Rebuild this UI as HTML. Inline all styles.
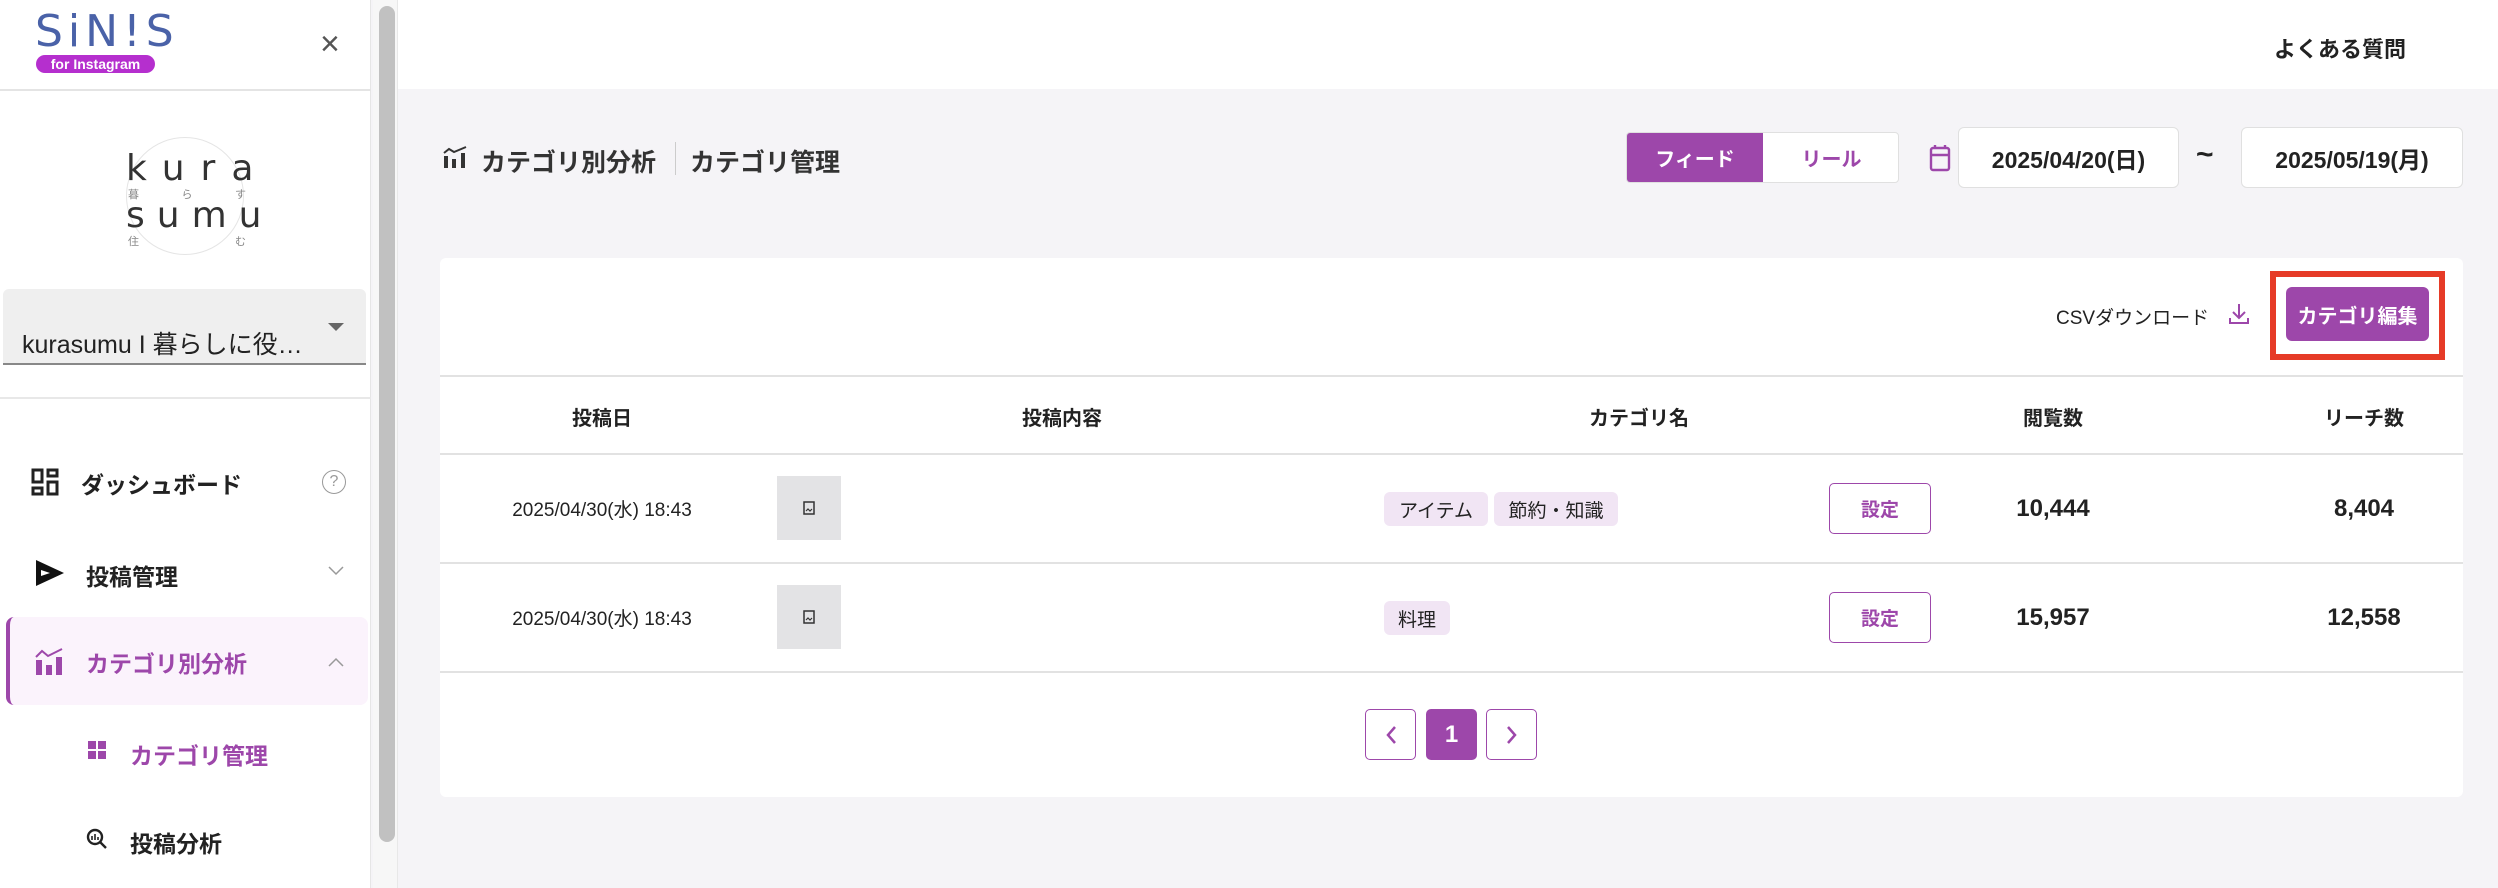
<!DOCTYPE html>
<html><head><meta charset="utf-8">
<style>
*{margin:0;padding:0;box-sizing:border-box}
body{width:2498px;height:888px;overflow:hidden;background:#f5f4f7;font-family:"Liberation Sans","Noto Sans CJK JP",sans-serif;color:#222;position:relative}
.a{position:absolute}
.c{display:flex;align-items:center;justify-content:center}
.pur{color:#9d47aa}
</style></head><body>
<div class="a" style="left:398px;top:0;width:2100px;height:89px;background:#fff"></div>
<div class="a" style="left:2274px;top:32px;font-size:22px;font-weight:700;color:#222">よくある質問</div>

<div class="a" style="left:0;top:0;width:371px;height:888px;background:#fff;border-right:1px solid #e6e6e6"></div>
<div class="a" style="left:373px;top:0;width:25px;height:888px;background:#f7f7f7;border-right:1px solid #e8e8e8"></div>
<div class="a" style="left:379px;top:6px;width:16px;height:836px;background:#c1c1c1;border-radius:8px"></div>

<div class="a" style="left:35px;top:8px;font-size:44px;letter-spacing:5px;color:#4a62a8;font-family:'DejaVu Sans',sans-serif;line-height:48px">SiN!S</div>
<div class="a c" style="left:36px;top:55px;width:119px;height:18px;background:#b52fce;border-radius:9px;color:#fff;font-size:14px;font-weight:700">for Instagram</div>
<div class="a" style="left:320px;top:25px;font-size:34px;color:#555;font-weight:300">×</div>
<div class="a" style="left:0;top:89px;width:371px;height:2px;background:#e4e4e4"></div>

<div class="a" style="left:126px;top:137px;width:118px;height:118px;border:1px solid #e5e5e5;border-radius:50%"></div>
<div class="a" style="left:126px;top:148px;font-size:36px;letter-spacing:16px;color:#333;font-family:'DejaVu Sans',sans-serif">kura</div>
<div class="a" style="left:128px;top:186px;font-size:11px;color:#888;width:118px;display:flex;justify-content:space-between"><span>暮</span><span>ら</span><span>す</span></div>
<div class="a" style="left:126px;top:195px;font-size:36px;letter-spacing:12px;color:#333;font-family:'DejaVu Sans',sans-serif">sumu</div>
<div class="a" style="left:128px;top:233px;font-size:11px;color:#888;width:118px;display:flex;justify-content:space-between"><span>住</span><span>む</span></div>

<div class="a" style="left:3px;top:289px;width:363px;height:76px;background:#efefef;border-radius:6px 6px 0 0;border-bottom:2px solid #888"></div>
<div class="a" style="left:22px;top:325px;font-size:25px;color:#222">kurasumu I 暮らしに役…</div>
<div class="a" style="left:328px;top:323px;width:0;height:0;border-left:8px solid transparent;border-right:8px solid transparent;border-top:8px solid #666"></div>
<div class="a" style="left:0;top:397px;width:371px;height:2px;background:#e8e8e8"></div>

<svg class="a" style="left:31px;top:468px" width="28" height="28" viewBox="0 0 28 28" fill="none" stroke="#222" stroke-width="3"><rect x="2" y="2" width="9" height="12"/><rect x="17" y="2" width="9" height="6"/><rect x="2" y="20" width="9" height="6"/><rect x="17" y="14" width="9" height="12"/></svg>
<div class="a" style="left:81px;top:466px;font-size:23px;font-weight:700">ダッシュボード</div>
<div class="a c" style="left:322px;top:470px;width:24px;height:24px;border:1.5px solid #999;border-radius:50%;color:#999;font-size:16px">?</div>

<svg class="a" style="left:36px;top:560px" width="28" height="26" viewBox="0 0 28 26"><path d="M0 0 L28 13 L0 26 Z M5 10 L5 16 L14 13 Z" fill="#111" fill-rule="evenodd"/></svg>
<div class="a" style="left:86px;top:558px;font-size:23px;font-weight:700">投稿管理</div>
<svg class="a" style="left:328px;top:566px" width="16" height="10" viewBox="0 0 16 10" fill="none" stroke="#999" stroke-width="1.5"><path d="M1 1 L8 8 L15 1"/></svg>

<div class="a" style="left:6px;top:617px;width:362px;height:88px;background:#fbf3fc;border-radius:8px;border-left:4px solid #9d47aa"></div>
<svg class="a" style="left:35px;top:648px" width="28" height="27" viewBox="0 0 28 27"><path d="M1 9 L7 3 L13 8 L27 1" fill="none" stroke="#9d47aa" stroke-width="2"/><rect x="1" y="12" width="6" height="15" fill="#9d47aa"/><rect x="11" y="17" width="6" height="10" fill="#9d47aa"/><rect x="21" y="9" width="6" height="18" fill="#9d47aa"/></svg>
<div class="a pur" style="left:86px;top:645px;font-size:23px;font-weight:700">カテゴリ別分析</div>
<svg class="a" style="left:328px;top:657px" width="16" height="10" viewBox="0 0 16 10" fill="none" stroke="#999" stroke-width="1.5"><path d="M1 9 L8 2 L15 9"/></svg>

<svg class="a" style="left:88px;top:741px" width="18" height="18" viewBox="0 0 18 18" fill="#9d47aa"><rect x="0" y="0" width="8" height="8"/><rect x="10" y="0" width="8" height="8"/><rect x="0" y="10" width="8" height="8"/><rect x="10" y="10" width="8" height="8"/></svg>
<div class="a pur" style="left:130px;top:737px;font-size:23px;font-weight:700">カテゴリ管理</div>

<svg class="a" style="left:86px;top:828px" width="22" height="22" viewBox="0 0 22 22" fill="none" stroke="#222" stroke-width="2.4"><circle cx="9" cy="9" r="7"/><path d="M14 14 L20 20"/><path d="M6 12V8M9 12V6M12 12V9" stroke-width="1.6"/></svg>
<div class="a" style="left:130px;top:825px;font-size:23px;font-weight:700">投稿分析</div>

<svg class="a" style="left:443px;top:146px" width="24" height="22" viewBox="0 0 24 22"><path d="M1 7 L6 3 L11 6 L23 1" fill="none" stroke="#333" stroke-width="2"/><rect x="1" y="10" width="4" height="12" fill="#333"/><rect x="9" y="13" width="4" height="9" fill="#333"/><rect x="18" y="7" width="4" height="15" fill="#333"/></svg>
<div class="a" style="left:481px;top:143px;font-size:25px;font-weight:700;color:#333">カテゴリ別分析</div>
<div class="a" style="left:675px;top:142px;width:1px;height:33px;background:#ccc"></div>
<div class="a" style="left:690px;top:143px;font-size:25px;font-weight:700;color:#333">カテゴリ管理</div>

<div class="a" style="left:1626px;top:132px;width:273px;height:51px;background:#fff;border:1px solid #e0e0e0;border-radius:4px;overflow:hidden">
<div class="a c" style="left:0;top:0;width:136px;height:100%;background:#9d47aa;color:#fff;font-size:20px;font-weight:700">フィード</div>
<div class="a c pur" style="left:136px;top:0;width:137px;height:100%;font-size:20px;font-weight:700">リール</div>
</div>
<svg class="a" style="left:1929px;top:144px" width="22" height="28" viewBox="0 0 22 28" fill="none" stroke="#9d47aa" stroke-width="2.4"><rect x="2" y="4" width="18" height="22" rx="2"/><path d="M2 11H20M6 1V5M16 1V5"/></svg>
<div class="a c" style="left:1958px;top:127px;width:221px;height:61px;background:#fff;border:1px solid #e0e0e0;border-radius:6px;font-size:23px;font-weight:700">2025/04/20(日)</div>
<div class="a" style="left:2196px;top:138px;font-size:30px;font-weight:700">~</div>
<div class="a c" style="left:2241px;top:127px;width:222px;height:61px;background:#fff;border:1px solid #e0e0e0;border-radius:6px;font-size:23px;font-weight:700">2025/05/19(月)</div>

<div class="a" style="left:440px;top:258px;width:2023px;height:539px;background:#fff;border-radius:6px"></div>
<div class="a" style="left:2056px;top:303px;font-size:19px;color:#222">CSVダウンロード</div>
<svg class="a" style="left:2228px;top:303px" width="22" height="22" viewBox="0 0 22 22" fill="none" stroke="#9d47aa" stroke-width="2"><path d="M11 1V14M5 9L11 15L17 9M2 15V20H20V15"/></svg>
<div class="a" style="left:2270px;top:271px;width:175px;height:89px;border:6px solid #e63b27"></div>
<div class="a c" style="left:2286px;top:287px;width:143px;height:54px;background:#9d47aa;border-radius:6px;color:#fff;font-size:20px;font-weight:700">カテゴリ編集</div>

<div class="a" style="left:440px;top:375px;width:2023px;height:2px;background:#e2e2e2"></div>
<div class="a" style="left:440px;top:453px;width:2023px;height:2px;background:#e2e2e2"></div>
<div class="a" style="left:440px;top:562px;width:2023px;height:2px;background:#e2e2e2"></div>
<div class="a" style="left:440px;top:671px;width:2023px;height:2px;background:#e2e2e2"></div>

<div class="a c" style="left:502px;top:400px;width:200px;height:32px;font-size:20px;font-weight:700">投稿日</div>
<div class="a c" style="left:962px;top:400px;width:200px;height:32px;font-size:20px;font-weight:700">投稿内容</div>
<div class="a c" style="left:1539px;top:400px;width:200px;height:32px;font-size:20px;font-weight:700">カテゴリ名</div>
<div class="a c" style="left:1953px;top:400px;width:200px;height:32px;font-size:20px;font-weight:700">閲覧数</div>
<div class="a c" style="left:2264px;top:400px;width:200px;height:32px;font-size:20px;font-weight:700">リーチ数</div>

<div class="a c" style="left:452px;top:492px;width:300px;height:32px;font-size:19px">2025/04/30(水) 18:43</div>
<div class="a c" style="left:777px;top:476px;width:64px;height:64px;background:#e3e3e5"><svg width="12" height="14" viewBox="0 0 12 14" fill="none" stroke="#333" stroke-width="1.5"><rect x="1" y="1" width="10" height="12"/><path d="M3 10L5 8L7 10L9 8" stroke-width="1.2"/></svg></div>
<div class="a c" style="left:1384px;top:492px;width:104px;height:34px;background:#f1e5f4;border-radius:6px;font-size:19px">アイテム</div>
<div class="a c" style="left:1494px;top:492px;width:124px;height:34px;background:#f1e5f4;border-radius:6px;font-size:19px">節約・知識</div>
<div class="a c pur" style="left:1829px;top:483px;width:102px;height:51px;border:1.5px solid #9d47aa;border-radius:5px;font-size:19px;font-weight:700">設定</div>
<div class="a c" style="left:1953px;top:492px;width:200px;height:34px;font-size:24px;font-weight:700">10,444</div>
<div class="a c" style="left:2264px;top:492px;width:200px;height:34px;font-size:24px;font-weight:700">8,404</div>

<div class="a c" style="left:452px;top:601px;width:300px;height:32px;font-size:19px">2025/04/30(水) 18:43</div>
<div class="a c" style="left:777px;top:585px;width:64px;height:64px;background:#e3e3e5"><svg width="12" height="14" viewBox="0 0 12 14" fill="none" stroke="#333" stroke-width="1.5"><rect x="1" y="1" width="10" height="12"/><path d="M3 10L5 8L7 10L9 8" stroke-width="1.2"/></svg></div>
<div class="a c" style="left:1384px;top:601px;width:66px;height:34px;background:#f1e5f4;border-radius:6px;font-size:19px">料理</div>
<div class="a c pur" style="left:1829px;top:592px;width:102px;height:51px;border:1.5px solid #9d47aa;border-radius:5px;font-size:19px;font-weight:700">設定</div>
<div class="a c" style="left:1953px;top:601px;width:200px;height:34px;font-size:24px;font-weight:700">15,957</div>
<div class="a c" style="left:2264px;top:601px;width:200px;height:34px;font-size:24px;font-weight:700">12,558</div>

<div class="a c" style="left:1365px;top:709px;width:51px;height:51px;border:1.5px solid #9d47aa;border-radius:5px"><svg width="12" height="20" viewBox="0 0 12 20" fill="none" stroke="#9d47aa" stroke-width="2.5"><path d="M10 2L3 10L10 18"/></svg></div>
<div class="a c" style="left:1426px;top:709px;width:51px;height:51px;background:#9d47aa;border-radius:5px;color:#fff;font-size:24px;font-weight:700">1</div>
<div class="a c" style="left:1486px;top:709px;width:51px;height:51px;border:1.5px solid #9d47aa;border-radius:5px"><svg width="12" height="20" viewBox="0 0 12 20" fill="none" stroke="#9d47aa" stroke-width="2.5"><path d="M2 2L9 10L2 18"/></svg></div>
</body></html>
